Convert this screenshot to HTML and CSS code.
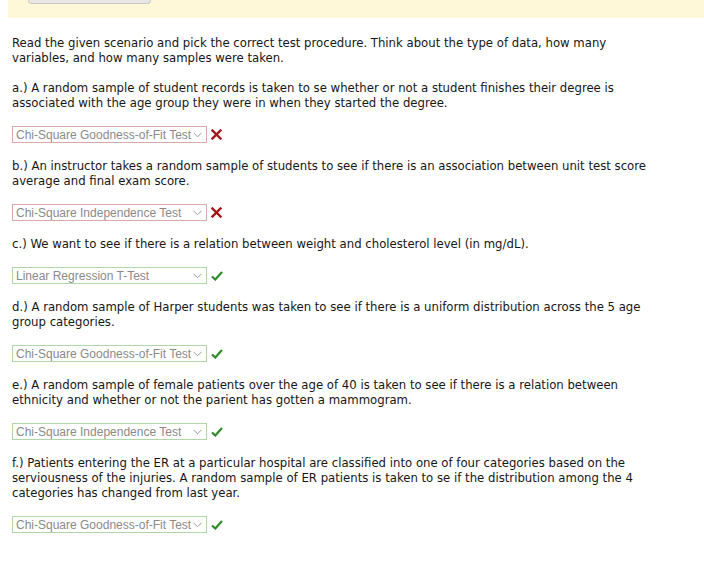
FILE: index.html
```html
<!DOCTYPE html>
<html>
<head>
<meta charset="utf-8">
<link rel="stylesheet" href="styles.css">
</head>
<body>
<div class="banner"><div class="banner-btn"></div></div>
<div class="content">
  <p class="text">Read the given scenario and pick the correct test procedure. Think about the type of data, how many variables, and how many samples were taken.</p>

  <div class="q">
    <p class="text">a.) A random sample of student records is taken to se whether or not a student finishes their degree is associated with the age group they were in when they started the degree.</p>
    <div class="answer">
      <div class="sel wrong"><span class="val">Chi-Square Goodness-of-Fit Test</span><svg class="chev" width="9" height="6" viewBox="0 0 9 6"><path d="M0.5 0.8 L4.5 4.8 L8.5 0.8" fill="none" stroke="#9a9a9a" stroke-width="1"/></svg></div>
      <svg class="mark" width="11" height="11" viewBox="0 0 11 11"><path d="M1.5 1.5 L9.5 9.5 M9.5 1.5 L1.5 9.5" stroke="#a3161a" stroke-width="2.4" stroke-linecap="square"/></svg>
    </div>
  </div>

  <div class="q">
    <p class="text">b.) An instructor takes a random sample of students to see if there is an association between unit test score average and final exam score.</p>
    <div class="answer">
      <div class="sel wrong"><span class="val">Chi-Square Independence Test</span><svg class="chev" width="9" height="6" viewBox="0 0 9 6"><path d="M0.5 0.8 L4.5 4.8 L8.5 0.8" fill="none" stroke="#9a9a9a" stroke-width="1"/></svg></div>
      <svg class="mark" width="11" height="11" viewBox="0 0 11 11"><path d="M1.5 1.5 L9.5 9.5 M9.5 1.5 L1.5 9.5" stroke="#a3161a" stroke-width="2.4" stroke-linecap="square"/></svg>
    </div>
  </div>

  <div class="q">
    <p class="text">c.) We want to see if there is a relation between weight and cholesterol level (in mg/dL).</p>
    <div class="answer">
      <div class="sel right"><span class="val">Linear Regression T-Test</span><svg class="chev" width="9" height="6" viewBox="0 0 9 6"><path d="M0.5 0.8 L4.5 4.8 L8.5 0.8" fill="none" stroke="#9a9a9a" stroke-width="1"/></svg></div>
      <svg class="mark" width="12" height="10" viewBox="0 0 12 10"><path d="M1 5.5 L4.3 8.5 L11 1" fill="none" stroke="#2e8a2a" stroke-width="2.2"/></svg>
    </div>
  </div>

  <div class="q">
    <p class="text">d.) A random sample of Harper students was taken to see if there is a uniform distribution across the 5 age group categories.</p>
    <div class="answer">
      <div class="sel right"><span class="val">Chi-Square Goodness-of-Fit Test</span><svg class="chev" width="9" height="6" viewBox="0 0 9 6"><path d="M0.5 0.8 L4.5 4.8 L8.5 0.8" fill="none" stroke="#9a9a9a" stroke-width="1"/></svg></div>
      <svg class="mark" width="12" height="10" viewBox="0 0 12 10"><path d="M1 5.5 L4.3 8.5 L11 1" fill="none" stroke="#2e8a2a" stroke-width="2.2"/></svg>
    </div>
  </div>

  <div class="q">
    <p class="text">e.) A random sample of female patients over the age of 40 is taken to see if there is a relation between ethnicity and whether or not the parient has gotten a mammogram.</p>
    <div class="answer">
      <div class="sel right"><span class="val">Chi-Square Independence Test</span><svg class="chev" width="9" height="6" viewBox="0 0 9 6"><path d="M0.5 0.8 L4.5 4.8 L8.5 0.8" fill="none" stroke="#9a9a9a" stroke-width="1"/></svg></div>
      <svg class="mark" width="12" height="10" viewBox="0 0 12 10"><path d="M1 5.5 L4.3 8.5 L11 1" fill="none" stroke="#2e8a2a" stroke-width="2.2"/></svg>
    </div>
  </div>

  <div class="q">
    <p class="text">f.) Patients entering the ER at a particular hospital are classified into one of four categories based on the serviousness of the injuries. A random sample of ER patients is taken to se if the distribution among the 4 categories has changed from last year.</p>
    <div class="answer">
      <div class="sel right"><span class="val">Chi-Square Goodness-of-Fit Test</span><svg class="chev" width="9" height="6" viewBox="0 0 9 6"><path d="M0.5 0.8 L4.5 4.8 L8.5 0.8" fill="none" stroke="#9a9a9a" stroke-width="1"/></svg></div>
      <svg class="mark" width="12" height="10" viewBox="0 0 12 10"><path d="M1 5.5 L4.3 8.5 L11 1" fill="none" stroke="#2e8a2a" stroke-width="2.2"/></svg>
    </div>
  </div>
</div>
</body>
</html>
```

FILE: styles.css
```css
html, body {
  margin: 0;
  padding: 0;
  background: #ffffff;
}

.banner {
  margin-left: 8px;
  height: 18px;
  background: #fef8d8;
}

.banner-btn {
  margin-left: 20px;
  width: 121px;
  height: 3px;
  background: #e9e8e6;
  border: 1px solid #c9c8c4;
  border-top: none;
  border-radius: 0 0 4px 4px;
}

.content {
  padding: 17px 12px 0 12px;
  display: flex;
  flex-direction: column;
  gap: 15px;
}

.text {
  margin: 0;
  font-family: "DejaVu Sans Condensed", "DejaVu Sans", sans-serif;
  font-size: 13px;
  line-height: 15px;
  color: #161616;
  max-width: 640px;
}

.q {
  display: flex;
  flex-direction: column;
  gap: 16px;
}

.answer {
  display: flex;
  align-items: center;
  gap: 4px;
}

.sel {
  box-sizing: border-box;
  width: 195px;
  height: 17px;
  display: flex;
  align-items: center;
  justify-content: space-between;
  padding: 0 4px 0 3px;
  border: 1px solid #d8a9a9;
  background: #fff;
}

.sel.right {
  border-color: #aed6a6;
}

.val {
  font-family: "Liberation Sans", Arial, sans-serif;
  font-size: 12px;
  color: #8a8a8a;
  white-space: nowrap;
}

.chev {
  display: block;
  flex: none;
}

.mark {
  display: block;
  flex: none;
}
```
